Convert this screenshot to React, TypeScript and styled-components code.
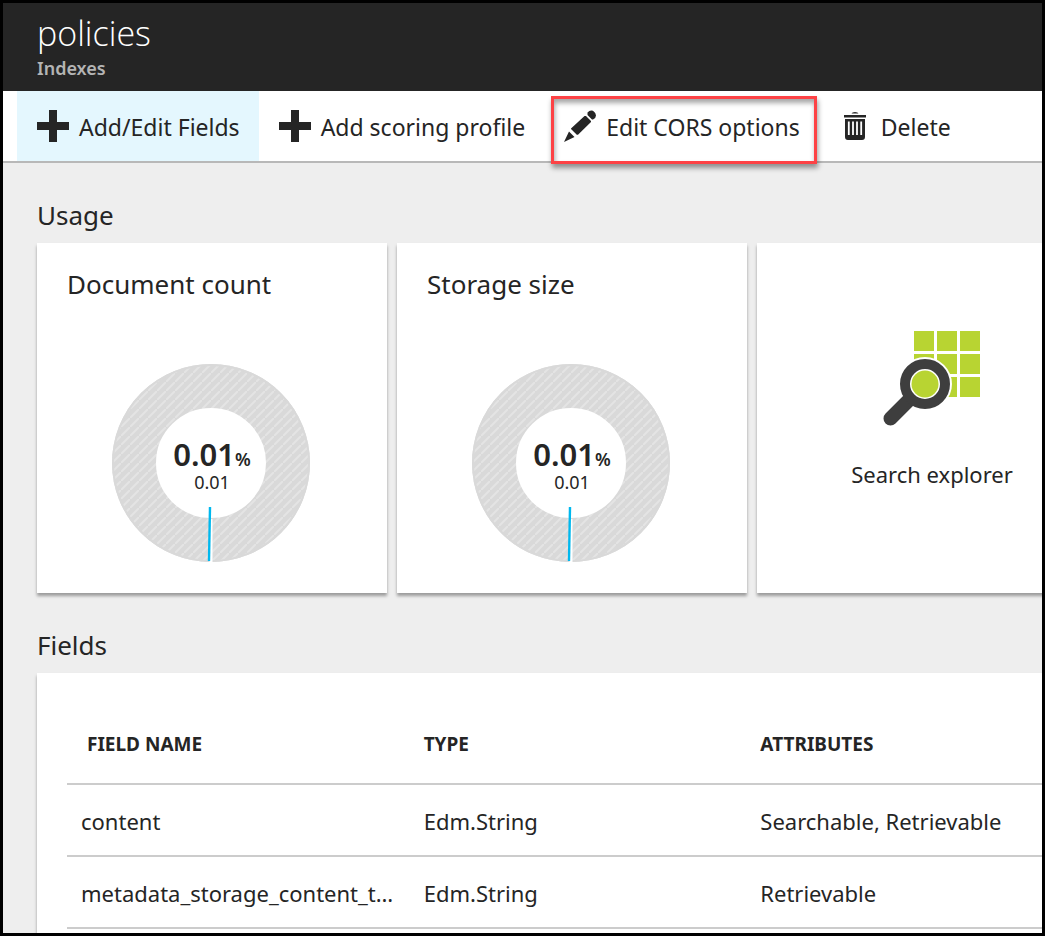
import React from 'react';
import styled, { createGlobalStyle } from 'styled-components';

const GlobalStyle = createGlobalStyle`
  * { box-sizing: border-box; }
  body {
    margin: 0;
    color: #252525;
    font-family: 'Noto Sans', 'Open Sans', sans-serif;
    font-size: 22px;
    line-height: 32px;
  }
`;

const Blade = styled.div`
  height: 100vh;
  display: flex;
  flex-direction: column;
  overflow: hidden;
  border: 3px solid #000;
  background: #eee;
`;

const Header = styled.header`
  flex: none;
  height: 88px;
  padding: 8px 34px;
  background: #252525;
`;

const Title = styled.h1`
  margin: 0;
  color: #fff;
  font-family: 'Open Sans', sans-serif;
  font-size: 34px;
  font-weight: 300;
  line-height: 44px;
`;

const Subtitle = styled.p`
  margin: 0;
  color: #b4b4b4;
  font-size: 18px;
  font-weight: 600;
  line-height: 26px;
`;

const Toolbar = styled.nav`
  flex: none;
  display: flex;
  height: 72px;
  padding-left: 14px;
  border-bottom: 2px solid #b8b8b8;
  background: #fff;
  font-size: 23px;
`;

const Command = styled.button<{ $active?: boolean }>`
  display: flex;
  align-items: center;
  gap: 10px;
  padding: 2px 19px 0 20px;
  border: 0;
  background: ${(p) => (p.$active ? '#e4f7fe' : 'transparent')};
  color: inherit;
  font: inherit;
  white-space: nowrap;
  svg { flex: none; margin-bottom: 2px; }
`;

const Highlight = styled.div`
  display: flex;
  height: 68px;
  margin: 5px 7px 0;
  border: 3px solid #fd4245;
  box-shadow: 1px 4px 5px rgba(0, 0, 0, 0.4), inset 1px 4px 5px rgba(0, 0, 0, 0.35);
  ${Command} { padding: 2px 14px 8px 10px; }
`;

const Body = styled.main`
  flex: 1;
  min-height: 0;
  overflow: hidden;
  padding: 36px 34px;
`;

const SectionTitle = styled.h2`
  margin: 0 0 12px;
  font-size: 26px;
  font-weight: 400;
  line-height: 32px;
`;

const Tiles = styled.div`
  display: flex;
  gap: 10px;
  margin-bottom: 36px;
`;

const Tile = styled.section`
  flex: none;
  display: flex;
  flex-direction: column;
  align-items: center;
  width: 350px;
  height: 350px;
  background: #fff;
  box-shadow: 0 3px 3px rgba(0, 0, 0, 0.35);
`;

const TileTitle = styled.h3`
  align-self: stretch;
  margin: 0;
  padding: 25px 30px 64px;
  font-size: 26px;
  font-weight: 400;
  line-height: 32px;
`;

const Gauge = styled.div`
  display: grid;
  place-items: center;
  > * { grid-area: 1 / 1; }
`;

const Reading = styled.div`
  padding-top: 4px;
  text-align: center;
`;

const Percent = styled.div`
  font-size: 31px;
  font-weight: 600;
  line-height: 26px;
  small { font-size: 18px; }
`;

const Amount = styled.div`
  font-size: 18px;
  line-height: 20px;
`;

const Launcher = styled.button`
  display: flex;
  flex-direction: column;
  align-items: center;
  gap: 30px;
  width: 100%;
  height: 100%;
  padding: 87px 0 0;
  border: 0;
  background: none;
  color: inherit;
  font: inherit;
`;

const Panel = styled.section`
  width: 1070px;
  padding: 30px;
  background: #fff;
  box-shadow: 0 3px 3px rgba(0, 0, 0, 0.35);
`;

const Table = styled.table`
  width: 100%;
  table-layout: fixed;
  border-collapse: separate;
  border-spacing: 0;
  text-align: left;
`;

const HeadCell = styled.th`
  height: 82px;
  padding: 2px 20px 0;
  border-bottom: 2px solid #ccc;
  font-size: 19px;
  font-weight: 700;
`;

const Cell = styled.td`
  height: 72px;
  padding: 2px 0 0 20px;
  border-bottom: 2px solid #ccc;
  overflow: hidden;
  text-overflow: ellipsis;
  white-space: nowrap;
  &:first-child { padding: 2px 6px 0 14px; }
`;

const PlusIcon = () => (
  <svg width="32" height="32" viewBox="0 0 32 32" fill="#252525" aria-hidden="true">
    <path d="M12 0h8v12h12v8H20v12h-8V20H0v-8h12z" />
  </svg>
);

const PencilIcon = () => (
  <svg width="32" height="32" viewBox="0 0 32 32" fill="#252525" aria-hidden="true">
    <path d="M23.500 2.500Q26-0.500 29 0.800Q31.500 2.500 32 5.500Q32 8 29 9.500L28 9.500L23.500 5zM20.500 6L22 6L27 11V12L14 24.800H12.800L7 19V18.500zM5 21.500L10.500 27L0 32z" />
  </svg>
);

const TrashIcon = () => (
  <svg width="27" height="28" viewBox="0 0 27 28" fill="#252525" aria-hidden="true">
    <path d="M7.500 1.500Q8 0 11 0T14.500 1.500zM0 3H22V5.500H0zM1 7H21V25Q21 28 18 28H4Q1 28 1 25z" />
    <path d="M4.800 9.500v13.500M9 9.500v13.500M13 9.500v13.500M17.200 9.500v13.500" stroke="#fff" strokeWidth="1.800" />
  </svg>
);

const SearchIcon = () => (
  <svg width="98" height="98" viewBox="0 0 98 98" aria-hidden="true">
    <g fill="#b8d432">
      {[1, 24, 47].map((y) => [31, 54, 77].map((x) => <rect key={`${x}-${y}`} x={x} y={y} width="20" height="20" />))}
    </g>
    <circle cx="42" cy="54" r="27" fill="#fff" />
    <path d="M30 66L7.500 88.500" stroke="#3e3e3e" strokeWidth="14" strokeLinecap="round" />
    <circle cx="42" cy="54" r="20" fill="#fff" stroke="#3e3e3e" strokeWidth="10" />
    <circle cx="42" cy="54" r="13.500" fill="#b8d432" />
  </svg>
);

const Ring = ({ id }: { id: string }) => (
  <svg width="200" height="200" viewBox="0 0 200 200" aria-hidden="true">
    <defs>
      <pattern id={id} width="9" height="9" patternUnits="userSpaceOnUse">
        <rect width="9" height="9" fill="#d9d9d9" />
        <path d="M0.800 8.200L8.200 0.800" stroke="#e4e4e4" strokeWidth="2" strokeLinecap="round" />
      </pattern>
    </defs>
    <circle cx="99" cy="99" r="77" fill="none" stroke={`url(#${id})`} strokeWidth="44" />
    <circle cx="99" cy="99" r="98" fill="none" stroke="#d9d9d9" strokeWidth="2" />
    <path d="M99 155V198" stroke="#fff" strokeWidth="3" />
    <path d="M98 143L97 197" stroke="#00b8ee" strokeWidth="2.400" />
  </svg>
);

const usage = [
  { title: 'Document count', percent: '0.01', amount: '0.01' },
  { title: 'Storage size', percent: '0.01', amount: '0.01' },
];

const fields = [
  { name: 'content', type: 'Edm.String', attributes: 'Searchable, Retrievable' },
  { name: 'metadata_storage_content_type', type: 'Edm.String', attributes: 'Retrievable' },
];

export default function App() {
  return (
    <>
      <GlobalStyle />
      <Blade>
        <Header>
          <Title>policies</Title>
          <Subtitle>Indexes</Subtitle>
        </Header>
        <Toolbar>
          <Command $active><PlusIcon />Add/Edit Fields</Command>
          <Command><PlusIcon />Add scoring profile</Command>
          <Highlight>
            <Command><PencilIcon />Edit CORS options</Command>
          </Highlight>
          <Command><TrashIcon />Delete</Command>
        </Toolbar>
        <Body>
          <SectionTitle>Usage</SectionTitle>
          <Tiles>
            {usage.map((u, i) => (
              <Tile key={u.title}>
                <TileTitle>{u.title}</TileTitle>
                <Gauge>
                  <Ring id={`stripes-${i}`} />
                  <Reading>
                    <Percent>{u.percent}<small>%</small></Percent>
                    <Amount>{u.amount}</Amount>
                  </Reading>
                </Gauge>
              </Tile>
            ))}
            <Tile>
              <Launcher><SearchIcon />Search explorer</Launcher>
            </Tile>
          </Tiles>
          <SectionTitle>Fields</SectionTitle>
          <Panel>
            <Table>
              <thead>
                <tr>
                  <HeadCell>FIELD NAME</HeadCell>
                  <HeadCell>TYPE</HeadCell>
                  <HeadCell>ATTRIBUTES</HeadCell>
                </tr>
              </thead>
              <tbody>
                {fields.map((f) => (
                  <tr key={f.name}>
                    <Cell>{f.name}</Cell>
                    <Cell>{f.type}</Cell>
                    <Cell>{f.attributes}</Cell>
                  </tr>
                ))}
              </tbody>
            </Table>
          </Panel>
        </Body>
      </Blade>
    </>
  );
}
